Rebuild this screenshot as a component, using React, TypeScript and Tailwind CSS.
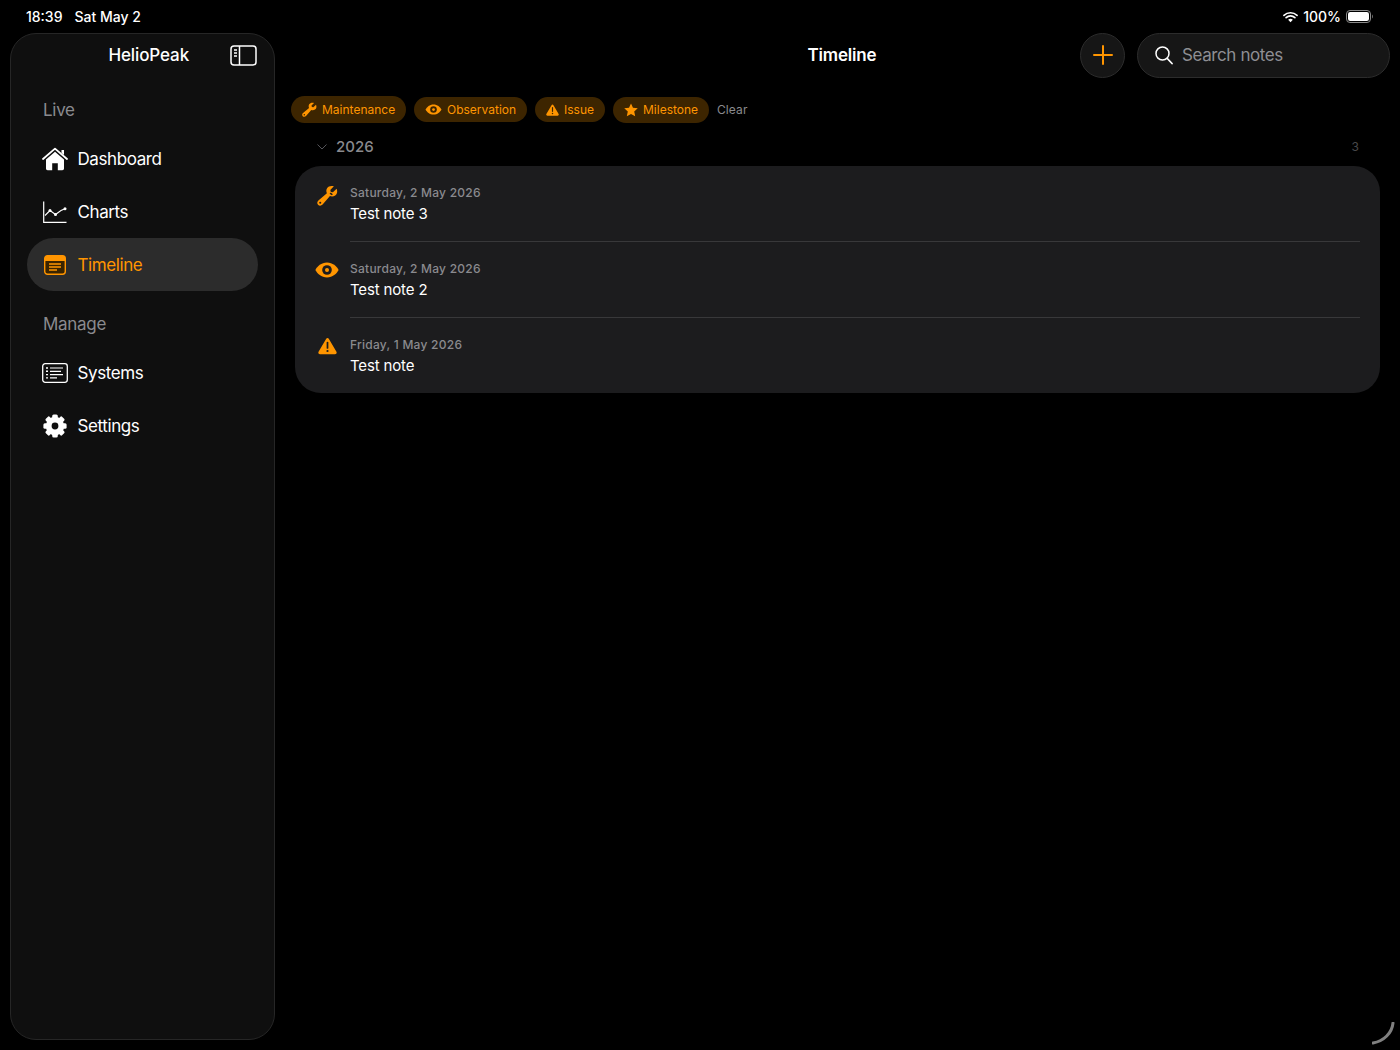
import React from "react";

const Wrench = ({ size, adjustable = false }: { size: number; adjustable?: boolean }) => (
  <svg width={size} height={size} viewBox="0 0 24 24" fill="#ff9500">
    <path d="M22.400 4.400 18.200 8.400 15.800 7.900 15.200 5.600 19.300 1.500C16.300.4 13 1.200 11.500 3.600 10.400 5.400 10.400 7.600 11.300 9.400L1.600 17.600C-.1 19.100-.1 21.300 1.200 22.700 2.600 24.100 4.900 24 6.400 22.400L14.800 12.700C16.700 13.600 19 13.400 20.800 12.100 23.100 10.500 23.700 7.200 22.400 4.400Z" />
    <circle cx="3.700" cy="20.300" r="1.200" fill={adjustable ? "#1c1c1e" : "#3d2500"} />
    {adjustable && <path d="M15.600 8.700 18.200 10.500 16.800 11.600 14.400 9.900Z" fill="#1c1c1e" />}
  </svg>
);

const Eye = ({ w, h, hole }: { w: number; h: number; hole: string }) => (
  <svg width={w} height={h} viewBox="0 0 24 16" fill="none">
    <path d="M12 .6C6.400.6 2.200 4.400.4 8 2.200 11.600 6.400 15.400 12 15.400S21.800 11.600 23.600 8C21.800 4.400 17.600.6 12 .6Z" fill="#ff9500" />
    <circle cx="12" cy="8" r="4.800" fill={hole} />
    <circle cx="12" cy="8" r="2" fill="#ff9500" />
  </svg>
);

const Warn = ({ w, h, hole }: { w: number; h: number; hole: string }) => (
  <svg width={w} height={h} viewBox="0 0 24 21" fill="none">
    <path d="M10.200 1.500C11 .1 13 .1 13.800 1.500L23.300 17.800C24.100 19.200 23.100 21 21.500 21H2.500C.9 21-.1 19.200.7 17.800Z" fill="#ff9500" />
    <path d="M12 6.200V13" stroke={hole} strokeWidth="2.200" strokeLinecap="round" />
    <circle cx="12" cy="16.800" r="1.400" fill={hole} />
  </svg>
);

const Star = () => (
  <svg width="14" height="14" viewBox="0 0 24 24" fill="#ff9500">
    <path d="M12 .8 15.400 8.300 23.600 9.200 17.500 14.700 19.200 22.800 12 18.700 4.800 22.800 6.500 14.700.4 9.200 8.600 8.300Z" />
  </svg>
);

const House = () => (
  <svg width="26" height="24" viewBox="0 0 26 24" fill="none">
    <path d="M1 12 13 1.600 25 12" stroke="#fff" strokeWidth="1.800" strokeLinecap="round" strokeLinejoin="round" />
    <path d="M19.500 3H22V8L19.500 6Z" fill="#fff" />
    <path d="M4 12.500 13 4.800 22 12.500V21.500C22 22.600 21.300 23.200 20.300 23.200H15.800V16.300H10.200V23.200H5.700C4.700 23.200 4 22.600 4 21.500Z" fill="#fff" />
  </svg>
);

const ChartIcon = () => (
  <svg width="24" height="22" viewBox="0 0 24 22" fill="none">
    <path d="M.7.5V21.300H23.500" stroke="#fff" strokeWidth="1.200" />
    <path d="M2 14.500 7 9.500 12.500 13.500 18 9.500 22.500 7.500" stroke="#fff" strokeWidth="1.100" />
    <circle cx="7" cy="9.500" r="1.500" fill="#fff" />
    <circle cx="12.500" cy="13.500" r="1.500" fill="#fff" />
    <circle cx="22" cy="7.700" r="1.500" fill="#fff" />
  </svg>
);

const TimelineIcon = () => (
  <svg width="22" height="20" viewBox="0 0 22 20" fill="none">
    <rect x=".7" y=".7" width="20.600" height="18.600" rx="2.800" stroke="#ff9500" strokeWidth="1.400" fill="#3a2400" />
    <path d="M.7 3.500C.7 1.900 1.900.7 3.500.7H18.500C20.100.7 21.300 1.900 21.300 3.500V6H.7Z" fill="#ff9500" />
    <path d="M5 9H17M5 12H17M5 15H13" stroke="#ff9500" strokeWidth="1.300" />
  </svg>
);

const SystemsIcon = () => (
  <svg width="26" height="20" viewBox="0 0 26 20" fill="none">
    <rect x=".7" y=".7" width="24.600" height="18.600" rx="2.500" stroke="#fff" strokeWidth="1.300" />
    <path d="M8 5H21M8 8.300H19M8 11.600H21M8 14.900H15" stroke="#fff" strokeWidth="1.200" />
    <path d="M4 5H6M4 8.300H6M4 11.600H6M4 14.900H6" stroke="#fff" strokeWidth="1.400" />
  </svg>
);

const Gear = () => {
  const teeth = [0, 45, 90, 135, 180, 225, 270, 315];
  return (
    <svg width="24" height="24" viewBox="0 0 24 24">
      {teeth.map((a) => (
        <rect key={a} x="9.200" y="0.400" width="5.600" height="6" rx="1.500" fill="#fff" transform={`rotate(${a} 12 12)`} />
      ))}
      <circle cx="12" cy="12" r="6.300" fill="none" stroke="#fff" strokeWidth="5.800" />
    </svg>
  );
};

const SidebarToggle = () => (
  <svg width="27" height="21" viewBox="0 0 27 21" fill="none">
    <rect x="1" y="1" width="25" height="19" rx="3" stroke="#fff" strokeWidth="1.500" />
    <path d="M9.500 1V20" stroke="#fff" strokeWidth="1.500" />
    <path d="M4 5H7M4 8H7M4 11H7" stroke="#fff" strokeWidth="1.300" />
  </svg>
);

function NavItem({ icon, label, active = false }: { icon: React.ReactNode; label: string; active?: boolean }) {
  return (
    <div className={active ? "h-[53px] mx-[16px] rounded-[27px] bg-[#2c2c2c] flex items-center pl-[15px]" : "h-[53px] mx-[16px] flex items-center pl-[15px]"}>
      <span className="w-[26px] flex justify-center items-center shrink-0">{icon}</span>
      <span className={active ? "ml-[9.500px] pt-[2px] text-[17px] tracking-[-0.4px] text-[#ff9500]" : "ml-[9.500px] pt-[2px] text-[17px] tracking-[-0.4px] text-white"}>{label}</span>
    </div>
  );
}

function Chip({ icon, label, cls }: { icon: React.ReactNode; label: string; cls: string }) {
  return (
    <div className={`flex items-center rounded-full bg-[#3d2500] text-[12px] text-[#ff9500] ${cls}`}>
      {icon}
      <span>{label}</span>
    </div>
  );
}

function Row({ icon, date, title, divider }: { icon: React.ReactNode; date: string; title: string; divider: boolean }) {
  return (
    <div className="h-[76px] flex">
      <div className="w-[55px] shrink-0 flex justify-center pt-[19px] pl-[10px]">{icon}</div>
      <div className={divider ? "flex-1 mr-[20px] pt-[18px] border-b border-[#38383a]" : "flex-1 mr-[20px] pt-[18px]"}>
        <div className="text-[12px] font-medium leading-[17px] text-[#8a8a8e] tracking-[0.25px]">{date}</div>
        <div className="text-[15px] leading-[20px] mt-[3px] tracking-[-0.15px] text-white">{title}</div>
      </div>
    </div>
  );
}

export default function App() {
  return (
    <div className="relative w-[1400px] h-[1050px] bg-black overflow-hidden flex flex-col text-white" style={{ fontFamily: "Inter, 'Liberation Sans', sans-serif" }}>
      <div className="h-[33px] shrink-0 flex items-center justify-between pl-[26px] pr-[26px] text-[14px] font-medium">
        <div className="flex gap-[12px]">
          <span>18:39</span>
          <span>Sat May 2</span>
        </div>
        <div className="flex items-center gap-[5px]">
          <svg width="15" height="12" viewBox="0 0 16 12" fill="none">
            <path d="M1 4.300C5 .5 11 .5 15 4.300M3.300 6.700C6 4.100 10 4.100 12.700 6.700" stroke="#fff" strokeWidth="1.700" strokeLinecap="round" />
            <path d="M5.500 8.800C7 7.500 9 7.500 10.500 8.800L8 11.500Z" fill="#fff" />
          </svg>
          <span>100%</span>
          <svg width="28" height="13" viewBox="0 0 28 13" fill="none">
            <rect x=".5" y=".5" width="24" height="12" rx="3.500" stroke="#8a8a8a" />
            <rect x="2" y="2" width="21" height="9" rx="2.200" fill="#fff" />
            <path d="M26 4.500C27 5 27 8 26 8.500Z" fill="#8a8a8a" />
          </svg>
        </div>
      </div>

      <div className="flex-1 flex pl-[10px]">
        <aside className="w-[265px] h-[1007px] shrink-0 rounded-[26px] bg-[#0f0f0f] border border-[#262626] flex flex-col">
          <div className="h-[42px] flex items-center shrink-0">
            <div className="w-[218.500px] text-center pl-[57px] pt-[2px]">
              <span className="text-[17px] font-medium tracking-[-0.1px] text-white">HelioPeak</span>
            </div>
            <SidebarToggle />
          </div>
          <div className="pl-[32px] mt-[23px] text-[17px] leading-[22px] tracking-[-0.3px] text-[#8a8a8e]">Live</div>
          <div className="mt-[11px]">
            <NavItem icon={<House />} label="Dashboard" />
            <NavItem icon={<ChartIcon />} label="Charts" />
            <NavItem icon={<TimelineIcon />} label="Timeline" active />
          </div>
          <div className="pl-[32px] mt-[22px] text-[17px] leading-[22px] tracking-[-0.3px] text-[#8a8a8e]">Manage</div>
          <div className="mt-[11px]">
            <NavItem icon={<SystemsIcon />} label="Systems" />
            <NavItem icon={<Gear />} label="Settings" />
          </div>
        </aside>

        <main className="flex-1 flex flex-col">
          <div className="h-[44px] flex items-center shrink-0">
            <div className="w-[805px] pl-[329px] pt-[2px] text-center text-[17px] font-semibold tracking-[-0.2px]">Timeline</div>
            <div className="w-[45px] h-[45px] rounded-full bg-[#161616] border border-[#2c2c2c] flex items-center justify-center">
              <svg width="20" height="20" viewBox="0 0 20 20" fill="none">
                <path d="M10 1V19M1 10H19" stroke="#ff9500" strokeWidth="2" strokeLinecap="round" />
              </svg>
            </div>
            <div className="ml-[12px] w-[253px] h-[45px] rounded-full bg-[#161616] border border-[#2c2c2c] flex items-center pl-[17px]">
              <svg width="18" height="19" viewBox="0 0 18 19" fill="none">
                <circle cx="7.500" cy="7.500" r="6.500" stroke="#fff" strokeWidth="1.500" />
                <path d="M12.300 12.500 17 17.500" stroke="#fff" strokeWidth="1.800" strokeLinecap="round" />
              </svg>
              <span className="ml-[9px] pt-[2px] text-[17px] tracking-[-0.4px] text-[#8e8e93]">Search notes</span>
            </div>
          </div>

          <div className="mt-[19px] h-[27px] flex items-center pl-[16px] shrink-0">
            <Chip cls="h-[27px] w-[115px] pl-[11px]" label="Maintenance" icon={<span className="mr-[5px] flex"><Wrench size={15} /></span>} />
            <Chip cls="h-[25px] w-[113px] ml-[8px] pl-[11px]" label="Observation" icon={<span className="mr-[5px] flex"><Eye w={17} h={11} hole="#3d2500" /></span>} />
            <Chip cls="h-[25px] w-[70px] ml-[8px] pl-[11px]" label="Issue" icon={<span className="mr-[5px] flex"><Warn w={13} h={12} hole="#3d2500" /></span>} />
            <Chip cls="h-[26px] w-[96px] ml-[8px] pl-[11px]" label="Milestone" icon={<span className="mr-[5px] flex"><Star /></span>} />
            <span className="ml-[8px] text-[12px] tracking-[0.1px] text-[#8a8a8e]">Clear</span>
          </div>

          <div className="h-[24px] mt-[13px] pb-[2px] flex items-center pl-[42px] pr-[41px] shrink-0">
            <svg width="10" height="6" viewBox="0 0 10 6" fill="none">
              <path d="M.5.5 5 5 9.500.5" stroke="#55555a" strokeWidth="1" />
            </svg>
            <span className="ml-[9px] flex-1 text-[15px] font-medium text-[#8a8a8e]">2026</span>
            <span className="text-[12px] text-[#48484a]">3</span>
          </div>

          <div className="ml-[20px] mr-[20px] mt-[6px] h-[227px] rounded-[26px] bg-[#1c1c1e] shrink-0">
            <Row icon={<Wrench size={21} adjustable />} date="Saturday, 2 May 2026" title="Test note 3" divider />
            <Row icon={<span className="block mt-[1px] -ml-[1px]"><Eye w={24} h={16} hole="#1c1c1e" /></span>} date="Saturday, 2 May 2026" title="Test note 2" divider />
            <Row icon={<span className="block"><Warn w={19} h={18} hole="#1c1c1e" /></span>} date="Friday, 1 May 2026" title="Test note" divider={false} />
          </div>
        </main>
      </div>

      <svg className="absolute right-[4px] bottom-[4px]" width="24" height="24" viewBox="0 0 24 24" fill="none">
        <path d="M21 1C20 11 12 19 1 21" stroke="#808080" strokeWidth="3" strokeLinecap="round" />
      </svg>
    </div>
  );
}
